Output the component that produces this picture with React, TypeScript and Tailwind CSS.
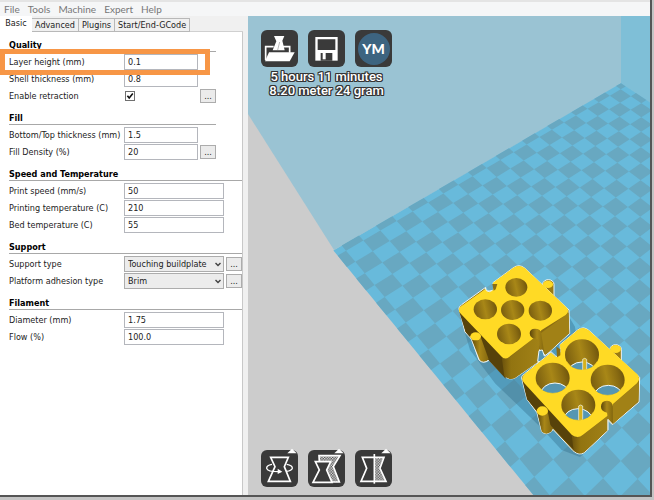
import { ReactNode, useState } from 'react';

const MENU = ['File', 'Tools', 'Machine', 'Expert', 'Help'];
const TABS = ['Basic', 'Advanced', 'Plugins', 'Start/End-GCode'];

type Field = {
  id: string;
  label: string;
  value: string;
  type?: 'text' | 'check' | 'select';
  more?: boolean;
  highlight?: boolean;
};

type Section = { title: string; narrow?: boolean; fields: Field[] };

const SECTIONS: Section[] = [
  {
    title: 'Quality',
    narrow: true,
    fields: [
      { id: 'layer-height', label: 'Layer height (mm)', value: '0.1', highlight: true },
      { id: 'shell', label: 'Shell thickness (mm)', value: '0.8' },
      { id: 'retraction', label: 'Enable retraction', value: '', type: 'check', more: true },
    ],
  },
  {
    title: 'Fill',
    narrow: true,
    fields: [
      { id: 'thickness', label: 'Bottom/Top thickness (mm)', value: '1.5' },
      { id: 'density', label: 'Fill Density (%)', value: '20', more: true },
    ],
  },
  {
    title: 'Speed and Temperature',
    fields: [
      { id: 'speed', label: 'Print speed (mm/s)', value: '50' },
      { id: 'temperature', label: 'Printing temperature (C)', value: '210' },
      { id: 'bed', label: 'Bed temperature (C)', value: '55' },
    ],
  },
  {
    title: 'Support',
    fields: [
      { id: 'support', label: 'Support type', value: 'Touching buildplate', type: 'select', more: true },
      { id: 'adhesion', label: 'Platform adhesion type', value: 'Brim', type: 'select', more: true },
    ],
  },
  {
    title: 'Filament',
    fields: [
      { id: 'diameter', label: 'Diameter (mm)', value: '1.75' },
      { id: 'flow', label: 'Flow (%)', value: '100.0' },
    ],
  },
];

const FieldControl = ({ field }: { field: Field }) => {
  const [checked, setChecked] = useState(true);

  if (field.type === 'check') {
    return (
      <span className="grid flex-1 items-center pl-px">
        <input
          id={field.id}
          type="checkbox"
          checked={checked}
          onChange={() => setChecked(!checked)}
          className="col-start-1 row-start-1 size-[10px] appearance-none border border-[#707070] bg-white"
        />
        {checked && (
          <svg viewBox="0 0 10 10" className="pointer-events-none col-start-1 row-start-1 size-[10px]">
            <path d="M2.4 4.8 4.2 7 7.8 2.6" fill="none" stroke="#111" strokeWidth="1.6" />
          </svg>
        )}
      </span>
    );
  }

  if (field.type === 'select') {
    return (
      <span className="grid min-w-0 flex-1 items-center">
        <select
          id={field.id}
          defaultValue={field.value}
          className="col-start-1 row-start-1 h-4 w-full appearance-none border border-[#acacac] bg-[#ececec] pl-[3px] leading-[14px]"
        >
          <option>{field.value}</option>
        </select>
        <svg viewBox="0 0 6 5" className="pointer-events-none col-start-1 row-start-1 mr-[3px] h-[5px] w-[6px] justify-self-end">
          <path d="M.5 1 3 3.6 5.5 1" fill="none" stroke="#444" strokeWidth="1.4" />
        </svg>
      </span>
    );
  }

  return (
    <input
      id={field.id}
      type="text"
      defaultValue={field.value}
      className="h-4 w-0 min-w-0 flex-1 border border-[#b4b6bc] bg-white px-[3px]"
    />
  );
};

const SettingsSection = ({ section }: { section: Section }) => (
  <section className={section.narrow ? 'w-[207px]' : 'w-[233px]'}>
    <h2 className="mb-[2px] flex h-5 items-end border-b border-[#a8a8a8] text-[9px] leading-[12px] font-bold text-black">
      {section.title}
    </h2>
    {section.fields.map((field) => (
      <div key={field.id} className="relative mb-px flex h-4 items-center gap-[2px]">
        <label htmlFor={field.id} className="w-[113px] shrink-0 leading-4 whitespace-nowrap">
          {field.label}
        </label>
        <FieldControl field={field} />
        {field.more ? (
          <button
            type="button"
            aria-label={`${field.label} options`}
            className="flex h-[14px] w-4 items-center justify-center border border-[#acacac] bg-[#ebebeb] leading-none"
          >
            ...
          </button>
        ) : (
          <span className="w-4" />
        )}
        {field.highlight && (
          <div className="pointer-events-none absolute -top-[5px] -left-[9px] z-10 h-[26px] w-[210px] border-[5px] border-[#f79646]" />
        )}
      </div>
    ))}
  </section>
);

// Perspective of the build plate, one unit is one square of the board
const project = (u: number, v: number) => {
  const w = 1 + 0.0141 * u - 0.014 * v;
  const x = (346 + 22.487 * u + 4.288 * v) / w;
  const y = (250.7 - 6.811 * u + 7.451 * v) / w;

  return `${x.toFixed(1)},${y.toFixed(1)}`;
};

const quad = (u0: number, v0: number, u1: number, v1: number) =>
  [project(u0, v0), project(u1, v0), project(u1, v1), project(u0, v1)].join(' ');

const START = -0.47;
const END = 20.47;

const Board = () => {
  const squares: string[] = [];

  for (let u = -1; u <= 20; u++) {
    for (let v = -1; v <= 20; v++) {
      if ((u + v) % 2 === 0) continue;
      squares.push(
        quad(Math.max(u, START), Math.max(v, START), Math.min(u + 1, END), Math.min(v + 1, END)),
      );
    }
  }

  return (
    <>
      <polygon points={quad(START, START, END, END)} fill="#68badb" />
      {squares.map((points) => (
        <polygon key={points} points={points} fill="#68a8c1" />
      ))}
    </>
  );
};

const Hole = ({ cx, cy, rx, ry }: { cx: number; cy: number; rx: number; ry: number }) => (
  <ellipse cx={cx} cy={cy} rx={rx} ry={ry} fill="url(#hole)" />
);

const ThroughHole = ({ id, cx, cy, bx, by, bar }: { id: string; cx: number; cy: number; bx: number; by: number; bar?: boolean }) => (
  <>
    <clipPath id={id}>
      <ellipse cx={cx} cy={cy} rx="51" ry="46" />
    </clipPath>
    <Hole cx={cx} cy={cy} rx={51} ry={46} />
    <g clipPath={`url(#${id})`}>
      <ellipse cx={bx} cy={by} rx="43" ry="34" fill="#5596b2" stroke="#f2f8fa" strokeWidth="3" />
      {bar && <path d={`M${bx + 2} ${by - 42}v60h12v-60q-6-6-12 0z`} fill="#d6b11c" stroke="#f2f8fa" strokeWidth="2" />}
    </g>
    <path
      d={`M${cx - 46} ${cy + 20}A51 46 0 0 0 ${cx + 46} ${cy + 20}`}
      fill="none"
      stroke="#ffda25"
      strokeWidth="2"
    />
  </>
);

const Scene = () => (
  <svg
    viewBox="248 16 402 479"
    preserveAspectRatio="xMinYMin slice"
    className="absolute inset-0 h-full w-full"
    aria-hidden="true"
  >
    <defs>
      <linearGradient id="hole" x1="0" y1="0.4" x2="1" y2="0.2">
        <stop offset="0" stopColor="#7c6010" />
        <stop offset="0.45" stopColor="#a88717" />
        <stop offset="0.75" stopColor="#8a6c12" />
        <stop offset="1" stopColor="#6a510c" />
      </linearGradient>
      <linearGradient id="shaft" x1="0" y1="0" x2="1" y2="0">
        <stop offset="0" stopColor="#5a450a" />
        <stop offset="0.5" stopColor="#a98718" />
        <stop offset="1" stopColor="#84680f" />
      </linearGradient>
      <linearGradient id="wall" x1="0" y1="0" x2="1" y2="0">
        <stop offset="0" stopColor="#6a510c" />
        <stop offset="0.25" stopColor="#927411" />
        <stop offset="1" stopColor="#a18116" />
      </linearGradient>
    </defs>

    <rect x="248" y="16" width="402" height="479" fill="#cccccc" />
    <polygon points="248,16 621,16 621,84 334,250 248,114" fill="#9ac3d3" />
    <polygon points="621,16 651,16 651,104 621,84" fill="#7fbfd7" />
    <Board />

    <g transform="translate(445 250) scale(.33333)">
      <path
        d="M44 195 75 300 150 400 290 535 350 600 405 621 440 590 390 230 372 200 360 240z"
        fill="#2f6a86"
        opacity="0.38"
      />

      {/* back part */}
      <g stroke="#eef6f8" strokeWidth="3" strokeLinejoin="round">
        <path d="M293 103v55h34v-55a17 14 0 0 0-34 0z" fill="#9a7b14" />
        <path
          d="M42 176 60 246 80 268 102 330Q114 342 132 330L175 376Q192 392 210 384L282 334 282 300 292 300 300 318 374 250 372 180 240 55Q222 40 204 54L144 98 148 122 120 124 122 112 50 164Q40 172 42 176z"
          fill="#8a6c12"
        />
      </g>
      <path d="M42 184 62 246 84 272 130 330 182 386 182 326z" fill="#57420a" />
      <path d="M170 320Q184 334 200 318L262 268 282 250 282 334 210 384Q195 392 178 379z" fill="url(#wall)" />
      <path d="M284 252 371 188 373 248 302 315 288 300z" fill="#a18116" />
      <ellipse cx="309" cy="103" rx="15" ry="11" fill="#ffda25" />
      <path
        d="M46 170 122 116 130 127 144 120 144 98 204 54Q222 42 240 55L364 172Q376 184 362 195L290 240 262 268 196 318Q182 332 170 320L48 192Q36 180 46 170z"
        fill="#ffda25"
      />
      <path d="M142 102 157 102 152 118 146 122z" fill="#8a6c12" />
      <path d="M122 114 124 122 133 125 142 121" fill="none" stroke="#eef6f8" strokeWidth="3" />
      <path d="M77 262 104 330Q114 342 131 328L106 258z" fill="url(#shaft)" />
      <path d="M75 258 103 330Q114 343 132 331" fill="none" stroke="#eef6f8" strokeWidth="2" />
      <ellipse cx="92" cy="259" rx="16" ry="12" fill="#ffda25" />
      <path d="M254 250Q254 236 270 236 288 236 289 252L298 310 286 302 278 268 262 264Q254 260 254 250z" fill="url(#shaft)" />
      <Hole cx={214} cy={112} rx={33} ry={28} />
      <Hole cx={121} cy={178} rx={35} ry={30} />
      <Hole cx={203} cy={180} rx={35} ry={30} />
      <Hole cx={286} cy={182} rx={35} ry={30} />
      <Hole cx={192} cy={252} rx={36} ry={31} />

      {/* front part */}
      <path d="M282 302 292 300 298 318 318 305 332 318 300 336 278 334z" fill="#5596b2" stroke="#eef6f8" strokeWidth="3" />
      <g stroke="#eef6f8" strokeWidth="3" strokeLinejoin="round">
        <path d="M495 298v50h34v-50a17 14 0 0 0-34 0z" fill="#9a7b14" />
        <path
          d="M230 384 246 448 276 488 290 544Q302 558 320 544L324 538 384 602Q402 618 418 608L488 542 488 510 502 524 582 456 584 382 434 243Q416 226 398 240L345 284 347 306 332 322 318 308 238 372Q228 380 230 384z"
          fill="#8a6c12"
        />
      </g>
      <path d="M232 390 246 448 276 484 330 540 392 606 396 558z" fill="#57420a" />
      <path d="M380 554Q398 570 414 556L488 498 488 540 418 606Q402 616 386 602z" fill="url(#wall)" />
      <path d="M502 464 582 396 580 454 504 522z" fill="#a18116" />
      <ellipse cx="512" cy="297" rx="16" ry="12" fill="#ffda25" />
      <path
        d="M238 373 318 308 334 322 347 306 345 284 398 240Q416 227 434 243L577 373Q588 386 576 400L504 462 490 496 414 554Q398 568 380 554L238 400Q226 386 238 373z"
        fill="#ffda25"
      />
      <path d="M334 290 346 298 346 316 336 322z" fill="#8a6c12" />
      <path d="M276 484 290 544Q302 558 320 544L308 484z" fill="url(#shaft)" />
      <ellipse cx="292" cy="483" rx="17" ry="14" fill="#ffda25" />
      <path d="M468 470Q468 452 486 452 503 453 503 470L503 522 489 510 486 488Q468 484 468 470z" fill="url(#shaft)" />
      <path d="M489 540V508L502 522" fill="none" stroke="#eef6f8" strokeWidth="3" />
      <ThroughHole id="h1" cx={411} cy={314} bx={411} by={370} bar />
      <ThroughHole id="h2" cx={323} cy={384} bx={330} by={433} />
      <ThroughHole id="h3" cx={488} cy={390} bx={490} by={440} />
      <ThroughHole id="h4" cx={400} cy={465} bx={399} by={510} bar />
    </g>
  </svg>
);

const ToolButton = ({ label, children }: { label: string; children: ReactNode }) => (
  <button
    type="button"
    aria-label={label}
    className="flex size-[37px] items-center justify-center rounded-md bg-[#3a3a3a]"
  >
    {children}
  </button>
);

const Drawing = ({ children }: { children: ReactNode }) => (
  <svg
    viewBox="0 0 111 111"
    className="size-full overflow-visible"
    fill="none"
    stroke="#fff"
    strokeWidth="5"
    aria-hidden="true"
  >
    <defs>
      <pattern id="hatch" width="8" height="8" patternUnits="userSpaceOnUse">
        <rect width="8" height="8" fill="#555" stroke="none" />
        <rect width="4" height="4" fill="#ddd" stroke="none" />
        <rect x="4" y="4" width="4" height="4" fill="#ddd" stroke="none" />
      </pattern>
    </defs>
    {children}
  </svg>
);

const Flag = () => <path d="M79 10 93-4 107 10z" fill="#fff" stroke="none" />;

const Viewport = () => (
  <main className="relative flex min-w-0 flex-1 flex-col justify-between overflow-hidden bg-[#ccc] px-[13px] pt-[14px] pb-2">
    <Scene />

    <div className="relative flex w-[131px] flex-col items-center">
      <div className="flex w-full justify-between">
        <ToolButton label="Load model">
          <Drawing>
            <path d="M38 50H14V90M66 50H86V68" />
            <path d="M24 67H101L86 94H12z" fill="#fff" stroke="none" />
            <path d="M39 18H70L64 32 71 61H35L46 34z" fill="#fff" stroke="none" />
            <path d="M56 36 50 60" stroke="#bbb" strokeWidth="3" />
          </Drawing>
        </ToolButton>
        <ToolButton label="Save toolpath">
          <Drawing>
            <path d="M22 21H89V92H22z" fill="#fff" stroke="none" />
            <path d="M29 28H82V60H29zM38 69H73V92H38z" fill="#3a3a3a" stroke="none" />
            <path d="M44 69H53V88H44z" fill="#fff" stroke="none" />
          </Drawing>
        </ToolButton>
        <ToolButton label="Share on YouMagine">
          <span className="flex size-8 items-center justify-center rounded-full bg-[#3d6480] font-['Lato'] text-[14px] leading-none font-black text-white">
            YM
          </span>
        </ToolButton>
      </div>
      <p className="mt-[3px] text-center font-['Roboto'] text-[13px] leading-[14px] font-medium whitespace-nowrap text-white [text-shadow:1px_0_#333,-1px_0_#333,0_1px_#333,0_-1px_#333,1px_1px_#333,-1px_-1px_#333,1px_-1px_#333,-1px_1px_#333]">
        5 hours 11 minutes
        <br />
        8.20 meter 24 gram
      </p>
    </div>

    <div className="relative flex w-[131px] justify-between">
      <ToolButton label="Rotate">
        <Drawing>
          <path d="M29 22H82L70 50 88 94H22L42 50z" />
          <path d="M33 43Q16 46 17 55 20 66 58 65M77 43Q95 46 94 55 92 62 76 64" strokeWidth="4" />
          <path d="M50 56 64 65 50 72z" fill="#fff" stroke="none" />
          <Flag />
        </Drawing>
      </ToolButton>
      <ToolButton label="Scale">
        <Drawing>
          <path d="M33 17H96L76 50 94 96H72L34 34z" fill="url(#hatch)" />
          <path d="M22 35H68L56 60 72 97H15L34 60z" fill="#3a3a3a" />
          <Flag />
        </Drawing>
      </ToolButton>
      <ToolButton label="Mirror">
        <Drawing>
          <path d="M58 22H86L74 55 92 94H58z" fill="url(#hatch)" stroke="none" />
          <path d="M22 22H87L75 55 93 94H18L35 55z" />
          <path d="M58 12V101" />
          <Flag />
        </Drawing>
      </ToolButton>
    </div>
  </main>
);

export default function App() {
  return (
    <div className="flex min-h-screen flex-col bg-[#c4c4c4] pr-[2px] pb-[3px] font-['DejaVu_Sans_Condensed','DejaVu_Sans',sans-serif] text-[9px] text-[#222]">
      <div className="flex flex-1 flex-col border-r-2 border-b-2 border-[#555] bg-[#f0f0f0]">
        <nav className="flex h-4 items-center gap-2 border-t-2 border-[#e4e4e4] bg-[#f5f6f7] pl-1 font-['Lato'] text-[10px] leading-[13px] text-[#777]">
          {MENU.map((item) => (
            <button key={item} type="button">
              {item}
            </button>
          ))}
        </nav>

        <div className="flex flex-1">
          <aside className="flex w-[248px] shrink-0 flex-col pr-[5px]">
            <div role="tablist" className="flex h-4 items-end">
              {TABS.map((tab, i) => (
                <button
                  key={tab}
                  type="button"
                  role="tab"
                  aria-selected={i === 0}
                  className={
                    i === 0
                      ? 'h-4 w-8 bg-white pb-[2px] leading-3'
                      : 'h-[14px] border border-l-0 border-[#b8b8b8] bg-[#f0f0f0] px-[3px] leading-3'
                  }
                >
                  {tab}
                </button>
              ))}
              <span className="flex-1 border-b border-[#d0d0d0]" />
            </div>
            <form className="flex-1 border-r border-[#c8c8c8] bg-white pl-[9px]">
              {SECTIONS.map((section) => (
                <SettingsSection key={section.title} section={section} />
              ))}
            </form>
          </aside>
          <Viewport />
        </div>
      </div>
    </div>
  );
}
